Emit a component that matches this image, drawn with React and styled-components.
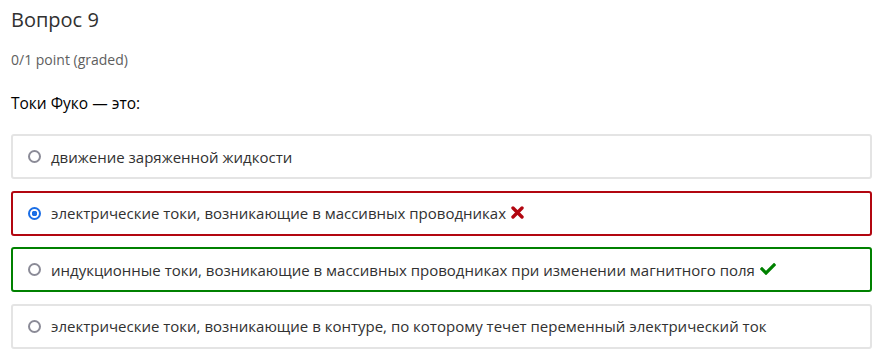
import React from "react";
import styled, { createGlobalStyle } from "styled-components";
import { FaCheck } from "react-icons/fa";

const Global = createGlobalStyle`
  html, body { margin: 0; padding: 0; background: #fff; }
  body { font-family: "Open Sans", "Noto Sans", sans-serif; color: #313131; }
`;

const Page = styled.div`
  padding: 6px 9px 0 11px;
`;

const Title = styled.h3`
  margin: 0;
  font-size: 20px;
  line-height: 28px;
  font-weight: 400;
  color: #313131;
`;

const Points = styled.div`
  margin-top: 17px;
  font-size: 14px;
  line-height: 18px;
  color: #5e5e5e;
`;

const Prompt = styled.p`
  margin: 24px 0 0;
  font-size: 15.5px;
  line-height: 20px;
  color: #000;
`;

const Options = styled.div`
  margin-top: 21px;
  display: flex;
  flex-direction: column;
  gap: 11.5px;
`;

const borderColor = {
  neutral: "#e4e4e4",
  wrong: "#b20610",
  right: "#008100",
};

const Option = styled.label`
  display: flex;
  align-items: center;
  box-sizing: border-box;
  height: 45px;
  padding: 0 14px 0 15px;
  border: 2px solid ${(p) => borderColor[p.$state]};
  border-radius: 3px;
  font-size: 15px;
  color: #313131;
`;

const Radio = styled.input`
  appearance: none;
  -webkit-appearance: none;
  box-sizing: border-box;
  width: 13px;
  height: 13px;
  margin: 0 10px 0 0;
  flex: none;
  border-radius: 50%;
  border: 2px solid #8b8b97;
  background: #fff;
  &:checked {
    border-color: #1a6ee6;
    background: radial-gradient(circle, #1a6ee6 0 2.6px, #fff 3px);
  }
`;

const Mark = styled.span`
  display: inline-flex;
  margin-left: 5px;
  color: ${(p) => (p.$ok ? "#008100" : "#b20610")};
  font-size: 16px;
  vertical-align: middle;
  position: relative;
  top: -2px;
`;

const Cross = () => (
  <svg width="13" height="13" viewBox="0 0 13 13" aria-hidden="true">
    <path d="M2 2 L11 11 M11 2 L2 11" stroke="currentColor" strokeWidth="3.4" strokeLinecap="round" />
  </svg>
);

const options = [
  { text: "движение заряженной жидкости", state: "neutral" },
  { text: "электрические токи, возникающие в массивных проводниках", state: "wrong", checked: true },
  { text: "индукционные токи, возникающие в массивных проводниках при изменении магнитного поля", state: "right" },
  { text: "электрические токи, возникающие в контуре, по которому течет переменный электрический ток", state: "neutral" },
];

export default function App() {
  return (
    <Page>
      <Global />
      <Title>Вопрос 9</Title>
      <Points>0/1 point (graded)</Points>
      <Prompt>Токи Фуко — это:</Prompt>
      <Options>
        {options.map((o, i) => (
          <Option key={i} $state={o.state}>
            <Radio type="radio" name="q9" defaultChecked={!!o.checked} />
            <span>
              {o.text}
              {o.state === "wrong" && (
                <Mark><Cross /></Mark>
              )}
              {o.state === "right" && (
                <Mark $ok><FaCheck /></Mark>
              )}
            </span>
          </Option>
        ))}
      </Options>
    </Page>
  );
}
